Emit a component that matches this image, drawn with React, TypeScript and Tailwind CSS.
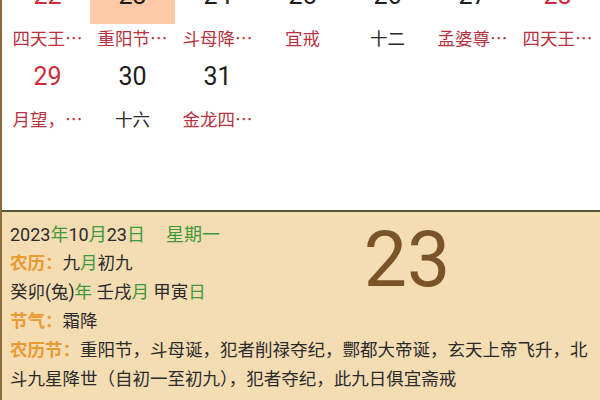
import React from 'react';

type Day = { n: number; lunar: string; red?: boolean; lunarRed?: boolean; today?: boolean };

const rows: (Day | null)[][] = [
  [
    { n: 22, lunar: '四天王…', red: true, lunarRed: true },
    { n: 23, lunar: '重阳节…', lunarRed: true, today: true },
    { n: 24, lunar: '斗母降…', lunarRed: true },
    { n: 25, lunar: '宜戒', lunarRed: true },
    { n: 26, lunar: '十二' },
    { n: 27, lunar: '孟婆尊…', lunarRed: true },
    { n: 28, lunar: '四天王…', red: true, lunarRed: true },
  ],
  [
    { n: 29, lunar: '月望，…', red: true, lunarRed: true },
    { n: 30, lunar: '十六' },
    { n: 31, lunar: '金龙四…', lunarRed: true },
    null,
    null,
    null,
    null,
  ],
];

const G = ({ children }: { children: React.ReactNode }) => <span className="text-[#3d9a3a]">{children}</span>;
const L = ({ children }: { children: React.ReactNode }) => (
  <span className="font-semibold text-[#eb9a33]">{children}</span>
);

const DayCell: React.FC<{ day: Day | null }> = ({ day }) => {
  if (!day) return <div className="h-[81px]" />;
  return (
    <div className="flex h-[81px] flex-col">
      <div
        className={`flex h-[50px] items-center justify-center pb-[6px] text-[25px] ${
          day.today ? 'bg-[#fdc9a6]' : ''
        } ${day.red ? 'text-[#cf2d3b]' : 'text-[#1e1e1e]'}`}
      >
        {day.n}
      </div>
      <div
        className={`text-center text-[17.5px] leading-[28px] whitespace-nowrap ${
          day.lunarRed ? 'text-[#b8323f]' : 'text-[#2a2a2a]'
        }`}
        style={{ fontFamily: '"Noto Sans CJK SC", Roboto, sans-serif' }}
      >
        {day.lunar}
      </div>
    </div>
  );
};

export default function App() {
  return (
    <div
      className="flex h-[400px] w-[600px] flex-col overflow-hidden border-l-2 border-[#8b6a3e] bg-white"
      style={{ fontFamily: 'Roboto, "Noto Sans CJK SC", sans-serif' }}
    >
      <div className="h-[210px] shrink-0 overflow-hidden pl-[3px]">
        <div className="-mt-[26px]">
          {rows.map((row, i) => (
            <div key={i} className="grid grid-cols-7">
              {row.map((d, j) => (
                <DayCell key={j} day={d} />
              ))}
            </div>
          ))}
        </div>
      </div>
      <div className="flex-1 border-t-2 border-[#57543b] bg-[#f4dcb3] pt-[8px] pr-[6px] pl-[8px] text-[17.5px] leading-[29px] text-[#2b2b2b]">
        <div className="flex">
          <div className="w-[210px] shrink-0">
            <div className="whitespace-nowrap text-[18px]">
              2023<G>年</G>10<G>月</G>23<G>日</G>
              <span className="ml-[21px]">
                <G>星期一</G>
              </span>
            </div>
            <div>
              <L>农历：</L>九<G>月</G>初九
            </div>
            <div className="whitespace-nowrap">
              癸卯(兔)<G>年</G> 壬戌<G>月</G> 甲寅<G>日</G>
            </div>
            <div>
              <L>节气：</L>霜降
            </div>
          </div>
          <div className="flex flex-1 justify-center">
            <div className="mt-[4px] text-[77px] leading-[72px] text-[#7b5329]">23</div>
          </div>
        </div>
        <div>
          <L>农历节：</L>重阳节，斗母诞，犯者削禄夺纪，酆都大帝诞，玄天上帝飞升，北斗九星降世（自初一至初九），犯者夺纪，此九日俱宜斋戒
        </div>
      </div>
    </div>
  );
}
